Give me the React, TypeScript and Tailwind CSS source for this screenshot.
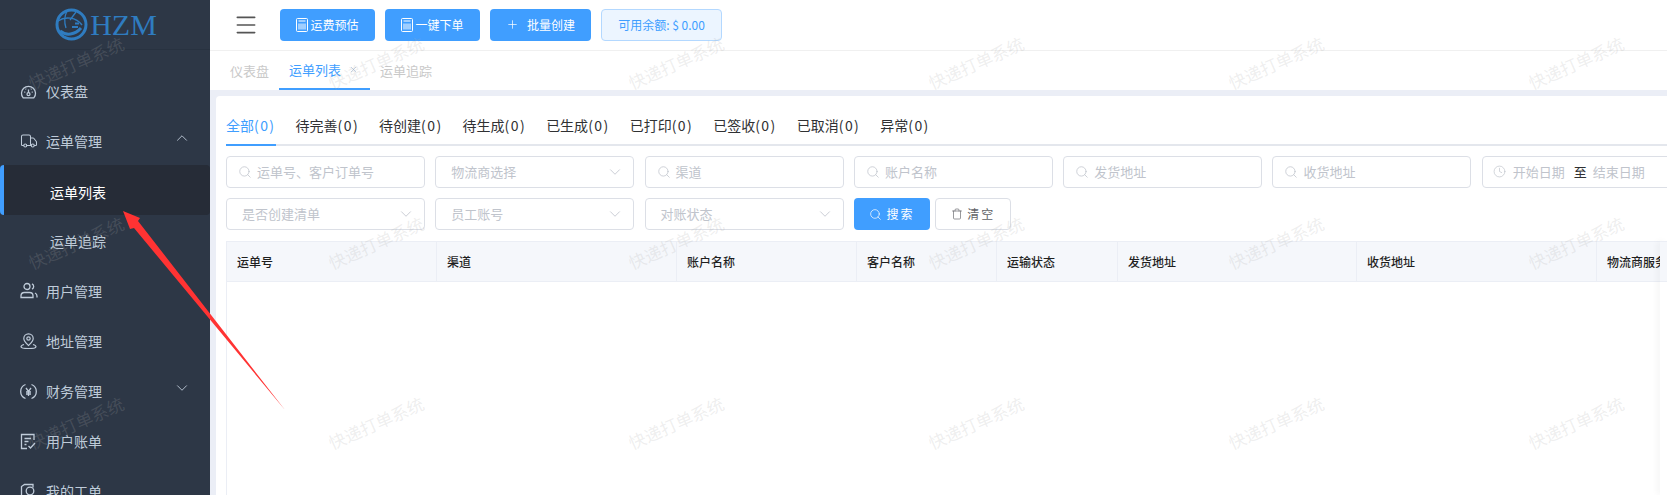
import { ChevronDown, ChevronUp, Clock, Menu, Plus, Search, Trash, Truck, X } from 'lucide-react'
import type { ReactNode } from 'react'

function GaugeIcon() {
  return (
    <svg width="17" height="17" viewBox="0 0 16 16" fill="none" stroke="currentColor" strokeWidth="1.2">
      <path d="M3 14h10a6.6 6.6 0 1 0-10 0Z" />
      <circle cx="8" cy="10.5" r="1.4" />
      <path d="M8 9V6M4 8.5h1M11 8.5h1M5.2 5.4l.6.6M10.8 5.4l-.6.6" />
    </svg>
  )
}

function UsersIcon() {
  return (
    <svg width="18" height="18" viewBox="0 0 18 18" fill="none" stroke="currentColor" strokeWidth="1.3">
      <circle cx="7" cy="4.5" r="3" />
      <path d="M1 15.5v-1.7A3.3 3.3 0 0 1 4.3 10.5h5.4A3.3 3.3 0 0 1 13 13.800v1.700Z" />
      <path d="M12 1.800a3 3 0 0 1 0 5.400M15 11c1.200.6 2 1.600 2 3v1.500" />
    </svg>
  )
}

function PinIcon() {
  return (
    <svg width="17" height="17" viewBox="0 0 17 17" fill="none" stroke="currentColor" strokeWidth="1.2">
      <path d="M8.500 12.500C6 10 3.800 8.200 3.800 5.500a4.700 4.700 0 0 1 9.400 0c0 2.700-2.200 4.500-4.700 7Z" />
      <circle cx="8.500" cy="5.500" r="1.700" />
      <path d="M4 11.500c-1.700.5-3 1.200-3 2.200 0 1.200 3 1.800 7.500 1.800s7.500-.6 7.500-1.800c0-1-1.300-1.700-3-2.200" />
    </svg>
  )
}

function YenIcon() {
  return (
    <svg width="17" height="17" viewBox="0 0 17 17" fill="none" stroke="currentColor" strokeWidth="1.3">
      <path d="M5.500 1.500a7.500 7.500 0 0 0 0 14M11.500 1.500a7.500 7.500 0 0 1 0 14" />
      <path d="M6 5l2.500 3.500L11 5M8.500 8.500V13M6 9h5M6 11h5" />
    </svg>
  )
}

function BillIcon() {
  return (
    <svg width="16" height="17" viewBox="0 0 16 17" fill="none" stroke="currentColor" strokeWidth="1.3">
      <path d="M14 7V1.500H1.500v14H7" />
      <path d="M4.500 5.500h6.500M4.500 8.500h4M4.500 11.500h2M8.500 13l2 2 4.500-5" />
    </svg>
  )
}

function TicketIcon() {
  return (
    <svg width="16" height="17" viewBox="0 0 16 17" fill="none" stroke="currentColor" strokeWidth="1.3">
      <path d="M1.500 15.500V3.500l3-2H13v3" />
      <circle cx="10" cy="8" r="3.800" />
      <path d="M10 12v3.500" />
    </svg>
  )
}

function CalcIcon() {
  return (
    <svg width="12" height="14" viewBox="0 0 12 14" fill="none" stroke="currentColor" strokeWidth="1">
      <rect x="0.500" y="0.500" width="11" height="13" rx="1" />
      <path d="M2.500 3h7M3 5.500v6M5 5.500v6M7 5.500v6M9 5.500v6" />
    </svg>
  )
}

function Logo() {
  return (
    <div className="flex h-[50px] shrink-0 items-center justify-center gap-[2px] border-b border-[#283240] pl-[2px] text-[#2f7cc0]">
      <svg width="33" height="33" viewBox="0 0 33 33" fill="none" stroke="currentColor">
        <circle cx="16.500" cy="16.500" r="14.500" strokeWidth="3" />
        <path d="M3 13c7-5 18-4 24 4" strokeWidth="1.500" />
        <path d="M12 3c-3 6-3 11-1 17M21 4l-6 8" strokeWidth="1.300" />
        <path d="M5 23c6 5 15 4 21-3" strokeWidth="3" />
        <path d="M17 19h6M20 15.500h4" strokeWidth="2" />
      </svg>
      <span className="font-['Liberation_Serif',serif] text-[30px] leading-none">HZM</span>
    </div>
  )
}

const menu: { label: string; icon: ReactNode; arrow?: 'up' | 'down' }[] = [
  { label: '仪表盘', icon: <GaugeIcon /> },
  { label: '运单管理', icon: <Truck size={18} strokeWidth={1.4} />, arrow: 'up' },
]

const menu2: { label: string; icon: ReactNode; arrow?: 'up' | 'down' }[] = [
  { label: '用户管理', icon: <UsersIcon /> },
  { label: '地址管理', icon: <PinIcon /> },
  { label: '财务管理', icon: <YenIcon />, arrow: 'down' },
  { label: '用户账单', icon: <BillIcon /> },
  { label: '我的工单', icon: <TicketIcon /> },
]

function MenuItem({ label, icon, arrow }: { label: string; icon: ReactNode; arrow?: 'up' | 'down' }) {
  return (
    <div className="flex h-[50px] shrink-0 items-center pl-[20px] pr-[19px] text-[14px] text-[#bfcbd9]">
      <span className="flex w-[26px] shrink-0 items-center">{icon}</span>
      <span className="flex-1">{label}</span>
      {arrow === 'up' && <ChevronUp size={18} strokeWidth={1.200} className="-mt-[6px]" />}
      {arrow === 'down' && <ChevronDown size={18} strokeWidth={1.200} className="-mt-[6px]" />}
    </div>
  )
}

function Sidebar() {
  return (
    <aside className="flex w-[210px] shrink-0 flex-col overflow-hidden bg-[#2d3746]">
      <Logo />
      <div className="flex shrink-0 flex-col pt-[16px]">
        {menu.map(m => <MenuItem key={m.label} {...m} />)}
        <div className="-mt-[1px] flex h-[50px] shrink-0 items-center rounded-[4px] border-l-[4px] border-[#409eff] bg-[#262c37] pl-[46px] pt-[4px] text-[14px] text-white">运单列表</div>
        <div className="mt-[1px] flex h-[50px] shrink-0 items-center pl-[50px] text-[14px] text-[#bfcbd9]">运单追踪</div>
        {menu2.map(m => <MenuItem key={m.label} {...m} />)}
      </div>
    </aside>
  )
}

function TopBar() {
  return (
    <header className="flex h-[51px] shrink-0 items-center border-b border-[#f0f0f0] bg-white pb-[1px] pl-[25px]">
      <Menu size={26} strokeWidth={1.500} className="-ml-[2px] text-[#555]" />
      <div className="ml-[21px] flex gap-[10px]">
        <button className="flex h-[32px] w-[95px] items-center justify-center gap-[2px] rounded-[4px] bg-[#409eff] text-[12px] text-white"><CalcIcon />运费预估</button>
        <button className="flex h-[32px] w-[95px] items-center justify-center gap-[2px] rounded-[4px] bg-[#409eff] text-[12px] text-white"><CalcIcon />一键下单</button>
        <button className="flex h-[32px] w-[101px] items-center justify-center gap-[8px] rounded-[4px] bg-[#409eff] text-[12px] text-white"><Plus size={13} strokeWidth={1.300} />批量创建</button>
        <div className="flex h-[32px] w-[121px] items-center justify-center rounded-[4px] border border-[#b3d8ff] bg-[#ecf5ff] text-[12px] text-[#409eff]">可用余额: $ 0.00</div>
      </div>
    </header>
  )
}

function TagsBar() {
  return (
    <div className="flex h-[39px] shrink-0 items-stretch bg-white pl-[20px] text-[13px] text-[#c9c9c9]">
      <span className="mr-[10px] flex items-center">仪表盘</span>
      <span className="flex w-[91px] items-center gap-[8px] border-b-2 border-[#409eff] pl-[10px] text-[#409eff]">
        运单列表 <X size={9} strokeWidth={1.300} className="text-[#8aa6c8]" />
      </span>
      <span className="ml-[10px] flex items-center">运单追踪</span>
    </div>
  )
}

const statuses = ['全部', '待完善', '待创建', '待生成', '已生成', '已打印', '已签收', '已取消', '异常']

function StatusTabs() {
  return (
    <div className="flex h-[40px] gap-[20px] border-b-2 border-[#e4e7ed] text-[14px] text-[#303133]">
      {statuses.map((s, i) => (
        <span key={s} className={i === 0 ? '-mb-[2px] flex items-center whitespace-nowrap border-b-2 border-[#409eff] text-[#409eff]' : 'flex items-center whitespace-nowrap'}>
          {s}<span className="tracking-[1.430px]">(0)</span>
        </span>
      ))}
    </div>
  )
}

function SearchInput({ text }: { text: string }) {
  return (
    <div className="flex h-[32px] w-[199px] shrink-0 items-center gap-[5px] rounded-[4px] border border-[#dcdfe6] pb-[1px] pl-[11px] text-[13px] text-[#c0c4cc]">
      <Search size={14} strokeWidth={1.300} />
      {text}
    </div>
  )
}

function SelectInput({ text }: { text: string }) {
  return (
    <div className="flex h-[32px] w-[199px] shrink-0 items-center justify-between rounded-[4px] border border-[#dcdfe6] pb-[1px] pl-[15px] pr-[9px] text-[13px] text-[#c0c4cc]">
      {text}
      <ChevronDown size={18} strokeWidth={1.100} />
    </div>
  )
}

function Filters() {
  return (
    <div className="flex flex-col gap-[10px] pt-[10px]">
      <div className="flex gap-[10.300px]">
        <SearchInput text="运单号、客户订单号" />
        <SelectInput text="物流商选择" />
        <SearchInput text="渠道" />
        <SearchInput text="账户名称" />
        <SearchInput text="发货地址" />
        <SearchInput text="收货地址" />
        <div className="flex h-[32px] w-[220px] shrink-0 items-center rounded-[4px] border border-[#dcdfe6] pb-[1px] pl-[10px] text-[13px] text-[#c0c4cc]">
          <Clock size={13} strokeWidth={1.300} className="mr-[7px]" />
          开始日期
          <span className="ml-[9px] mr-[6px] text-[#303133]">至</span>
          结束日期
        </div>
      </div>
      <div className="flex gap-[10.300px]">
        <SelectInput text="是否创建清单" />
        <SelectInput text="员工账号" />
        <SelectInput text="对账状态" />
        <button className="flex h-[32px] w-[76px] items-center justify-center gap-[4px] rounded-[4px] bg-[#409eff] text-[12px] tracking-[2px] text-white">
          <Search size={13} strokeWidth={1.300} />搜索
        </button>
        <button className="-ml-[5px] flex h-[32px] w-[76px] items-center justify-center gap-[4px] rounded-[4px] border border-[#dcdfe6] bg-white text-[12px] tracking-[2px] text-[#606266]">
          <Trash size={12} strokeWidth={1.300} />清空
        </button>
      </div>
    </div>
  )
}

const columns: [string, string][] = [
  ['运单号', 'w-[210px]'],
  ['渠道', 'w-[240px]'],
  ['账户名称', 'w-[180px]'],
  ['客户名称', 'w-[140px]'],
  ['运输状态', 'w-[121px]'],
  ['发货地址', 'w-[239px]'],
  ['收货地址', 'w-[240px]'],
  ['物流商服务', 'w-[140px]'],
]

function OrderTable() {
  return (
    <div className="mt-[11px] flex flex-1 border-l border-[#ebeef5]">
      <div className="flex-1 overflow-hidden">
        <div className="flex h-[41px] w-max border-y border-[#ebeef5] bg-[#f5f7fb] text-[12px] font-medium text-[#1f1f1f]">
          {columns.map(([name, width]) => (
            <div key={name} className={`flex items-center border-r border-[#ebeef5] pl-[10px] ${width}`}>{name}</div>
          ))}
        </div>
      </div>
      <div className="w-[7px] shrink-0 shadow-[-3px_0_6px_rgba(0,0,0,0.04)]">
        <div className="h-[41px] border-y border-[#ebeef5] bg-[#f5f7fb]" />
      </div>
    </div>
  )
}

function Watermarks() {
  return (
    <div className="pointer-events-none absolute -left-[74px] -top-[27px] grid grid-cols-[repeat(6,300px)] grid-rows-[repeat(3,180px)]">
      {Array.from({ length: 18 }).map((_, i) => (
        <div key={i} className="flex items-center justify-center">
          <span className="-rotate-[24deg] text-[17px] whitespace-nowrap text-[rgba(170,170,170,0.2)]">快递打单系统</span>
        </div>
      ))}
    </div>
  )
}

function Arrow() {
  return (
    <svg className="pointer-events-none absolute left-0 top-0" width="300" height="420" viewBox="0 0 300 420">
      <polygon points="123,211 140,218 138,221 285,410 134,228 130,229" fill="#ff3333" />
    </svg>
  )
}

export default function App() {
  return (
    <div className="relative flex h-[495px] w-[1667px] overflow-hidden bg-white font-['Noto_Sans_CJK_SC',sans-serif]">
      <Sidebar />
      <main className="flex min-w-0 flex-1 flex-col">
        <TopBar />
        <TagsBar />
        <section className="flex flex-1 flex-col overflow-hidden bg-[#ebeef6] pl-[6px] pt-[6px]">
          <div className="flex flex-1 flex-col overflow-hidden rounded-tl-[4px] bg-white pl-[10px] pt-[10px]">
            <StatusTabs />
            <Filters />
            <OrderTable />
          </div>
        </section>
      </main>
      <Arrow />
      <Watermarks />
    </div>
  )
}
